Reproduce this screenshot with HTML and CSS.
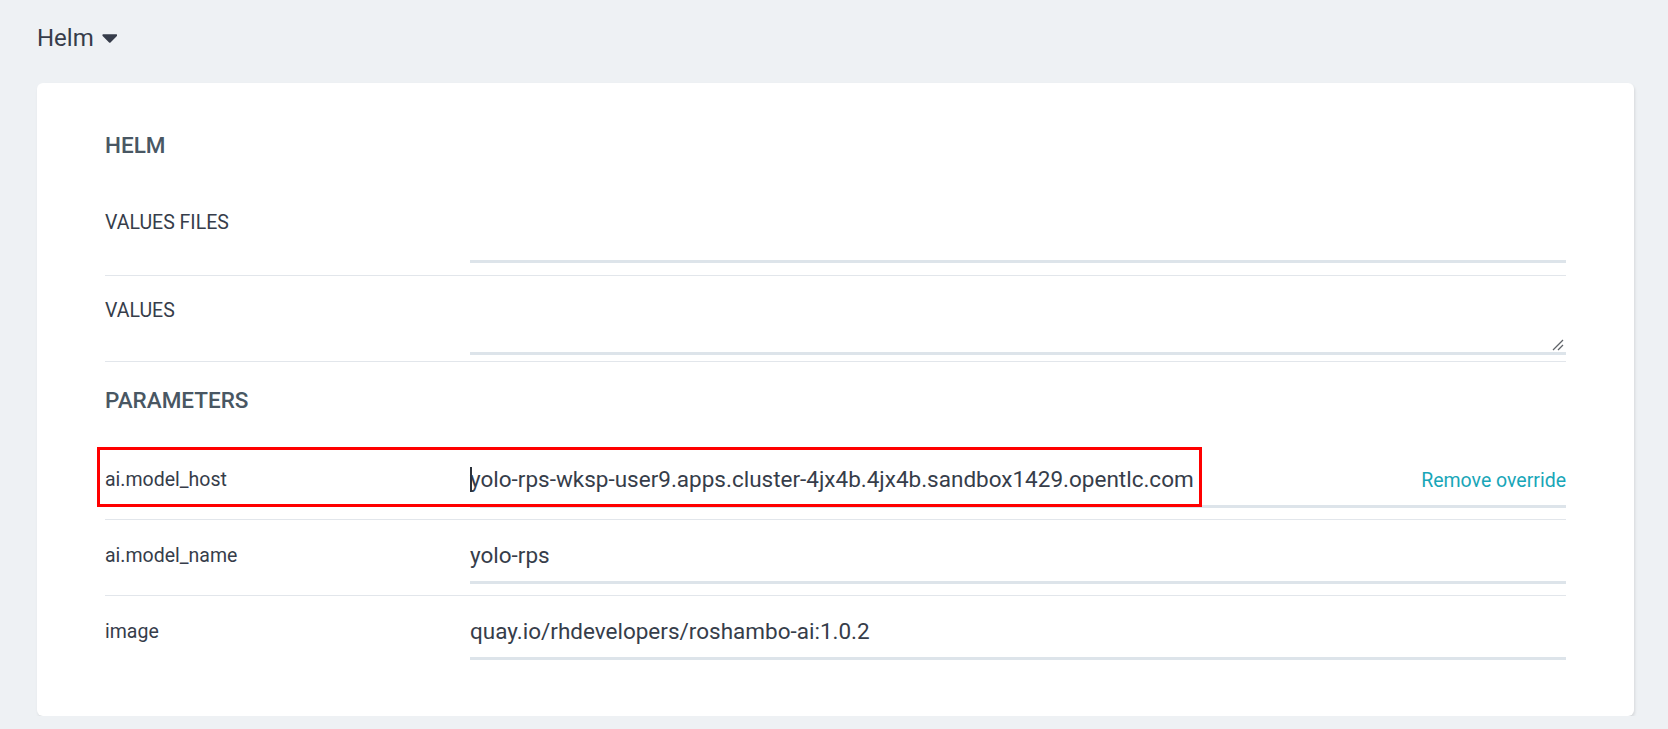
FILE: index.html
```html
<!DOCTYPE html>
<html lang="en">
<head>
<meta charset="utf-8">
<title>Helm parameters</title>
<link rel="stylesheet" href="styles.css">
</head>
<body>
<div class="page">
  <div class="crumb">
    <span>Helm</span>
    <svg class="caret" viewBox="4 190 300 172" aria-hidden="true"><path d="M31.3 192h257.3c17.8 0 26.7 21.5 14.1 34.1L174.1 354.8c-7.8 7.8-20.5 7.8-28.3 0L17.2 226.1C4.6 213.5 13.5 192 31.3 192z"/></svg>
  </div>
  <div class="card">
    <h2 class="section-title">HELM</h2>
    <div class="row row-files">
      <div class="label upper">VALUES FILES</div>
      <div class="field field-files"></div>
    </div>
    <div class="row row-values">
      <div class="label upper">VALUES</div>
      <div class="field area-wrap">
        <textarea class="values-area" aria-label="values"></textarea>
        <svg class="resizer" viewBox="0 0 12 12" aria-hidden="true"><path d="M11 1 L1 11 M11 6 L6 11"/></svg>
      </div>
    </div>
    <h2 class="section-title section-params">PARAMETERS</h2>
    <div class="row param">
      <div class="label">ai.model_host</div>
      <div class="field">
        <div class="input">
          <span class="cursor"></span>
          <span class="value">yolo-rps-wksp-user9.apps.cluster-4jx4b.4jx4b.sandbox1429.opentlc.com</span>
          <a class="remove" href="#">Remove override</a>
        </div>
      </div>
      <div class="annotation"></div>
    </div>
    <div class="row param">
      <div class="label">ai.model_name</div>
      <div class="field">
        <div class="input"><span class="value">yolo-rps</span></div>
      </div>
    </div>
    <div class="row param last">
      <div class="label">image</div>
      <div class="field">
        <div class="input"><span class="value">quay.io/rhdevelopers/roshambo-ai:1.0.2</span></div>
      </div>
    </div>
  </div>
</div>
</body>
</html>
```
FILE: styles.css
```css
* { box-sizing: border-box; }
html, body { margin: 0; background: #eef1f4; }
body { font-family: Roboto, "Noto Sans", sans-serif; color: #363d4a; }

.page { padding: 23px 34px 0 37px; }

.crumb {
  display: flex;
  align-items: center;
  gap: 8px;
  height: 30px;
  font-size: 24px;
  line-height: 30px;
  color: #363c4a;
}
.caret { width: 15px; height: 9px; fill: #363c4a; margin-top: 1px; }

.card {
  margin-top: 30px;
  background: #fff;
  border-radius: 6px;
  box-shadow: 1px 2px 3px rgba(0, 0, 0, 0.1);
  padding: 47px 68px 45px;
}

.section-title {
  margin: 0;
  font-size: 22.5px;
  font-weight: 500;
  line-height: 30px;
  color: #495763;
}
.section-params { margin: 23px 0 29px; }

.row {
  display: flex;
  align-items: flex-start;
  border-bottom: 1px solid #e2e6eb;
}
.label {
  width: 365px;
  flex: none;
  font-size: 19.5px;
  line-height: 24px;
  color: #363d4a;
}
.field { flex: 1; min-width: 0; }

.row-files { padding-bottom: 12px; }
.row-files .label { margin-top: 51px; }
.field-files { height: 103px; border-bottom: 3px solid #dde4ea; }

.row-values { padding-bottom: 6px; }
.row-values .label { margin-top: 23px; }
.area-wrap { position: relative; }
.values-area {
  display: block;
  width: 100%;
  height: 79px;
  margin: 0;
  padding: 0;
  border: 0;
  border-bottom: 3px solid #dde4ea;
  border-radius: 0;
  resize: none;
  outline: none;
  background: #fff;
  font: inherit;
}
.resizer {
  position: absolute;
  right: 2px;
  bottom: 4px;
  width: 12px;
  height: 12px;
  stroke: #5f6368;
  stroke-width: 1.3;
  fill: none;
}

.param { position: relative; padding-bottom: 11px; }
.param.last { border-bottom: 0; }
.param .label { margin-top: 24px; }
.param .field { padding-top: 9px; }

.input {
  position: relative;
  display: flex;
  align-items: baseline;
  height: 55px;
  border-bottom: 3px solid #dde4ea;
  font-size: 22.5px;
  line-height: 52px;
  color: #363d4a;
}
.value { flex: 1; white-space: nowrap; }
.remove {
  font-size: 19.5px;
  color: #19a6b8;
  text-decoration: none;
}
.cursor {
  position: absolute;
  left: 0;
  top: 14px;
  width: 2px;
  height: 25px;
  background: #2b313b;
}

.annotation {
  position: absolute;
  left: -8px;
  top: 3px;
  width: 1105px;
  height: 60px;
  border: 3px solid #ff0000;
  pointer-events: none;
}
```
